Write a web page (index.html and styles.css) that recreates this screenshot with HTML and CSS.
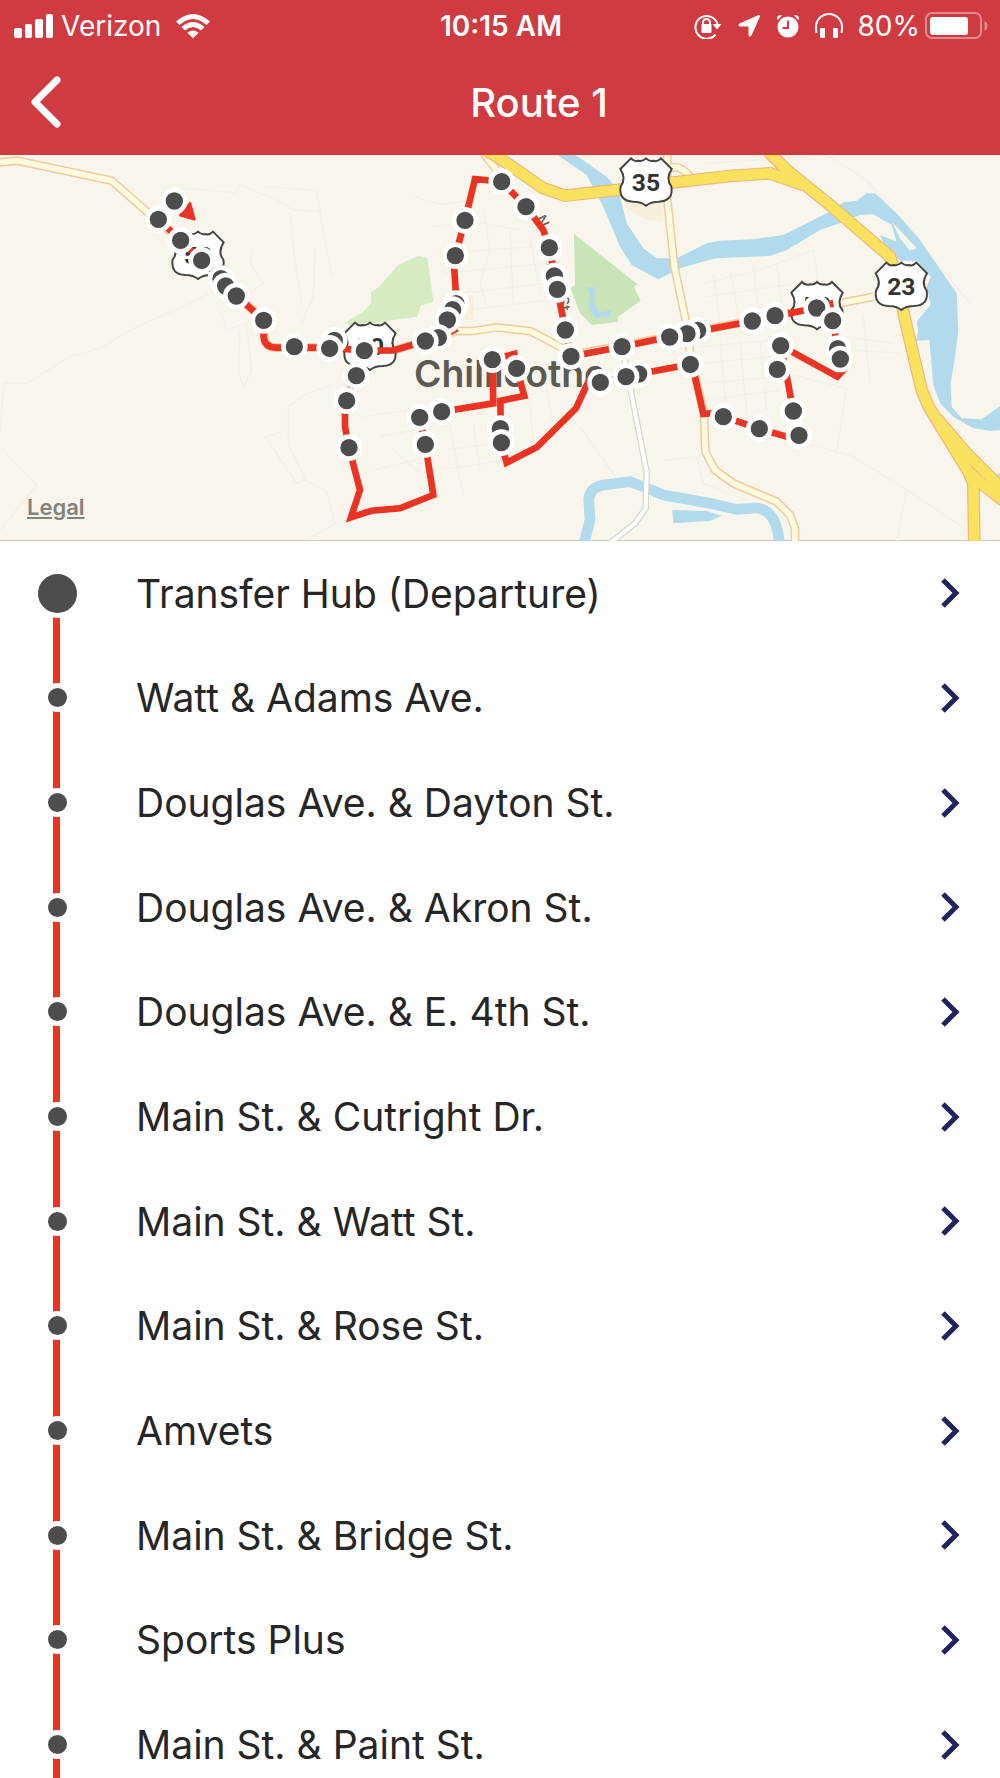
FILE: index.html
```html
<!DOCTYPE html>
<html lang="en">
<head>
    <meta charset="UTF-8">
    <meta name="viewport" content="width=device-width, initial-scale=1.0">
    <title>Route 1</title>
    <link rel="stylesheet" href="styles.css">
</head>
<body>
    <header class="header">
        <div class="status-bar">
            <div class="status-left">
                <svg class="signal" width="40" height="26" viewBox="0 0 40 26" aria-hidden="true">
                    <rect x="0" y="15" width="8" height="10" rx="2"/>
                    <rect x="11" y="11" width="7" height="14" rx="2"/>
                    <rect x="21" y="6" width="8" height="19" rx="2"/>
                    <rect x="32" y="1" width="7" height="24" rx="2"/>
                </svg>
                <span class="carrier">Verizon</span>
                <svg class="wifi" width="36" height="26" viewBox="0 0 36 26" aria-hidden="true">
                    <path d="M1 8.500Q18-6.500 35 8.500L31.500 12Q18 0 4.500 12Z"/>
                    <path d="M6.500 14Q18 4 29.500 14L26 17.500Q18 10.500 10 17.500Z"/>
                    <path d="M12.300 19.700Q18 15.300 23.700 19.700L18 25.300Z"/>
                </svg>
            </div>
            <span class="time">10:15 AM</span>
            <div class="status-right">
                <svg width="28" height="26" viewBox="0 0 28 26" aria-hidden="true">
                    <path class="line" d="M21.500 21.500A11.300 11.300 0 1 1 23.500 11"/>
                    <path d="M18.500 11H27.500L23 16.500Z"/>
                    <path class="line" d="M9 12V9.500a3.500 3.500 0 0 1 7 0V12"/>
                    <rect x="7.500" y="11" width="10" height="9" rx="1"/>
                </svg>
                <svg width="24" height="26" viewBox="0 0 24 26" aria-hidden="true">
                    <path d="M21.500 2Q23.500 1.500 23 3.500L14.500 22.500Q12.500 25 11.500 22V13.500H3Q0 12.500 2.500 10.500Z"/>
                </svg>
                <svg width="24" height="26" viewBox="0 0 24 26" aria-hidden="true">
                    <circle cx="12" cy="14" r="10.500"/>
                    <path d="M1 6.500Q.5 2 5 2L6 2.500L2 6.800ZM23 6.500Q23.500 2 19 2L18 2.500L22 6.800Z"/>
                    <path class="hand" d="M12 7.500V15H6.500"/>
                </svg>
                <svg width="28" height="26" viewBox="0 0 28 26" aria-hidden="true">
                    <path class="line" d="M1.500 20Q1 17 1 14A13 13 0 0 1 27 14Q27 17 26.500 20"/>
                    <path d="M5 16q0-1 1-1h4v9q0 1-1 1H6q-1 0-1-1ZM18 15h4q1 0 1 1v8q0 1-1 1h-3q-1 0-1-1Z"/>
                </svg>
                <span class="percent">80%</span>
                <svg class="battery" width="63" height="28" viewBox="0 0 63 28" aria-hidden="true">
                    <rect class="battery-case" x="1" y="1" width="55" height="25" rx="6"/>
                    <rect x="5" y="5" width="38" height="18" rx="3"/>
                    <path class="battery-tip" d="M59.500 9Q62.500 10.500 62.500 14T59.500 19Z"/>
                </svg>
            </div>
        </div>
        <div class="nav-bar">
            <button type="button" class="back" aria-label="Back">
                <svg width="32" height="52" viewBox="0 0 32 52" aria-hidden="true">
                    <path d="M27 4L5 26L27 48"/>
                </svg>
            </button>
            <h1>Route 1</h1>
        </div>
    </header>

    <div class="map">
        <svg class="map-canvas" viewBox="0 15 3000 1158" role="img" aria-label="Map of Route 1">
            <defs>
                <path id="shield" d="M-45 -70Q-34 -58 -22 -63Q-10 -60 0 -70Q10 -60 22 -63Q34 -58 45 -70L77 -38Q58 -8 76 14Q83 58 38 60Q14 60 0 72Q-14 60 -38 60Q-83 58 -76 14Q-58 -8 -77 -38Z"/>
            </defs>

            <!-- side streets -->
            <g class="street">
                <path d="M0 890L110 1005L0 1140M0 845L12 700H80L210 620L300 595L400 535L560 465L630 430"/>
                <path d="M560 115L705 128L720 105L830 150L880 180L960 185L995 380M800 110L950 122L965 210M870 190L885 330L905 470M905 520L940 440L945 300"/>
                <path d="M795 860L890 1000L915 990L865 880V770L920 730L1000 705M795 860L850 845M915 990L980 1025L1005 1120L930 1165"/>
                <path d="M760 290L750 340L790 400L720 450M660 480L680 540L740 520L755 660L730 715L715 660L720 540"/>
                <path d="M1240 140L1330 165L1400 150M1300 230L1420 215L1560 240M1310 310L1600 290M1330 370L1640 340M1450 180L1470 300L1440 400L1460 470M1530 240L1540 460M1590 260L1620 430M1380 430L1640 400M1400 480L1650 450"/>
                <path d="M1090 800L1230 780M1140 860L1240 840M1180 900L1260 970M1120 960L1250 930M1340 900L1480 880M1350 830L1390 1040M1420 820L1440 960M1590 760L1600 880M1640 720L1665 860M1320 960L1520 930M1740 830L1860 1000L1990 1040"/>
                <path d="M2110 400L2280 360L2440 300L2455 390M2120 440L2390 400M2140 370L2160 530M2190 360L2220 520M2260 350L2280 510M2330 340L2350 490M2100 590L2330 570M2110 640L2320 620M2110 700L2330 680M2120 750L2340 720M2160 570L2180 790M2220 570L2240 790M2280 570L2300 780"/>
                <path d="M2360 670L2540 715L2510 905M2420 880L2560 920L2720 1020L2690 1173M2720 1020L2900 1140M2540 560L2680 580M2560 600L2700 610M2590 500L2610 700M2120 40L2480 15L2600 90L2760 280L2910 460M1990 930L2090 920L2110 1000L2240 1050"/>
            </g>

            <!-- parks -->
            <path class="park-light" d="M1040 515L1090 485L1113 460V427L1135 412L1195 345L1255 318L1282 324L1300 455L1262 467L1252 500L1180 510L1050 530Z"/>
            <path class="park" d="M1722 252L1912 402L1902 412L1922 452L1852 502L1855 515L1775 525L1740 490L1712 415L1725 405Z"/>
            <path class="land" d="M1870 125L1990 110V215L1940 210L1880 175ZM1375 437H1420V510H1375Z"/>

            <!-- water -->
            <path class="water" d="M1757 412H1785L1782 460L1800 488L1835 480L1830 498L1785 503L1768 480L1770 432Z"/>
            <path class="water" d="M1665 10H1720L1820 80L1855 120L1880 220L1930 295L1970 325L2030 325L2120 280L2160 272L2260 268L2350 255L2480 190L2530 157L2570 152L2600 130H2625L2695 195L2760 270L2870 430L2875 545L2865 620L2852 700L2855 770L2885 805L2945 808L3000 768V840L2970 842L2920 835L2860 800L2820 760L2800 705L2788 570L2745 573L2755 545L2750 515L2770 490L2792 465L2780 410L2792 380L2750 332H2700L2660 300L2640 255L2690 275L2675 225L2620 193L2580 195L2520 220L2460 240L2360 300L2310 318L2145 325L2040 355L1975 388L1895 345L1860 290L1810 170L1760 75Z"/>
            <path class="island" d="M2676 215L2750 295L2730 302L2700 265Z"/>
            <path class="stream" d="M1752 1180L1770 1110L1766 1045Q1772 1012 1810 1005L1890 995L1935 1012L1990 1035L2130 1060L2210 1078L2270 1074Q2330 1080 2338 1180"/>
            <path class="water" d="M2017 1080L2120 1083L2165 1097L2130 1113L2020 1120ZM2970 980L3000 970V1000Z"/>

            <!-- roads, casing first and fill over it -->
            <g class="road-casing">
                <path d="M0 37L52 32L335 92L475 215L542 271L709 437L793 510V560Q795 593 830 593H990L1093 603L1180 601L1310 562L1370 543H1420L1490 532L1590 543L1680 590L1713 615L2008 560L2450 473L2620 440"/>
                <path d="M2002 0V150L2023 350L2055 500L2075 640L2112 790L2116 905L2145 960L2200 1000L2330 1055L2370 1095L2385 1135V1180"/>
                <path d="M2010 55Q2040 40 2080 90M1450 10L1490 60"/>
            </g>
            <g class="road">
                <path d="M0 37L52 32L335 92L475 215L542 271L709 437L793 510V560Q795 593 830 593H990L1093 603L1180 601L1310 562L1370 543H1420L1490 532L1590 543L1680 590L1713 615L2008 560L2450 473L2620 440"/>
                <path d="M2002 0V150L2023 350L2055 500L2075 640L2112 790L2116 905L2145 960L2200 1000L2330 1055L2370 1095L2385 1135V1180"/>
                <path d="M2010 55Q2040 40 2080 90M1450 10L1490 60"/>
            </g>
            <path class="lane-casing" d="M1868 600L1892 720L1940 965L1937 1075L1905 1120L1830 1180"/>
            <path class="lane" d="M1868 600L1892 720L1940 965L1937 1075L1905 1120L1830 1180"/>
            <path class="highway-casing" d="M1455 0L1500 25L1630 115L1695 137L1870 118L2015 98L2190 78L2310 70L2410 105M2305 5L2360 60L2410 100L2490 165L2670 320L2695 400L2713 500L2765 720L2785 768L2905 965L2920 1000L2923 1180M2810 805L2900 910L3010 1020M2905 965L2950 1005L3010 1052"/>
            <path class="highway" d="M1455 0L1500 25L1630 115L1695 137L1870 118L2015 98L2190 78L2310 70L2410 105M2305 5L2360 60L2410 100L2490 165L2670 320L2695 400L2713 500L2765 720L2785 768L2905 965L2920 1000L2923 1180M2810 805L2900 910L3010 1020M2905 965L2950 1005L3010 1052"/>

            <!-- labels -->
            <text class="city" x="1242" y="710">Chillicothe</text>
            <g class="street-name">
                <text transform="translate(1605 205) rotate(65)">N</text>
                <text transform="translate(1640 340) rotate(80)">B</text>
                <text transform="translate(1672 440) rotate(80)">St</text>
            </g>
            <g class="shield" transform="translate(1938 95)"><use href="#shield"/><text y="27">35</text></g>
            <g class="shield" transform="translate(2704 408)"><use href="#shield"/><text y="27">23</text></g>
            <g class="shield" transform="translate(2451 466)"><use href="#shield"/><text y="27">50</text></g>
            <g class="shield" transform="translate(1110 588)"><use href="#shield"/><text y="27">50</text></g>
            <g class="shield" transform="translate(594 315)"><use href="#shield"/><text y="27">50</text></g>

            <!-- bus route -->
            <path class="route" d="M523 153L475 208L542 271L605 330L709 437L791 510V560Q793 593 830 593H990L1093 602L1180 601L1276 573L1320 562L1362 540L1342 510L1358 478L1367 420L1363 360L1366 316L1395 211L1425 87L1505 95L1578 170L1630 240L1648 293L1672 418L1696 540L1713 619L1866 590L2008 560L2257 513L2450 473L2490 462L2498 513L2513 595L2535 655L2512 680L2342 587L2355 650L2380 783L2397 856L2360 860L2278 836L2170 800L2155 788L2110 792L2085 680L2071 643L1916 672L1801 697L1765 695L1728 775L1610 892L1520 938L1503 878L1501 752L1573 738L1550 655L1543 612L1477 629L1480 760L1325 785L1259 802L1276 883L1300 1035L1200 1075L1115 1082L1053 1102L1080 1020L1047 893L1035 830V752L1069 677L1093 602"/>
            <path class="arrow" d="M570 160L583 208L541 196Z"/>

            <g class="stop">
                <circle cx="523" cy="153" r="33"/>
                <circle cx="475" cy="208" r="33"/>
                <circle cx="542" cy="271" r="33"/>
                <circle cx="605" cy="331" r="33"/>
                <circle cx="663" cy="386" r="33"/>
                <circle cx="677" cy="408" r="33"/>
                <circle cx="709" cy="438" r="33"/>
                <circle cx="791" cy="511" r="33"/>
                <circle cx="883" cy="590" r="33"/>
                <circle cx="1003" cy="571" r="33"/>
                <circle cx="989" cy="595" r="33"/>
                <circle cx="1093" cy="602" r="33"/>
                <circle cx="1069" cy="677" r="33"/>
                <circle cx="1040" cy="752" r="33"/>
                <circle cx="1047" cy="893" r="33"/>
                <circle cx="1276" cy="883" r="33"/>
                <circle cx="1259" cy="802" r="33"/>
                <circle cx="1325" cy="785" r="33"/>
                <circle cx="1368" cy="461" r="33"/>
                <circle cx="1358" cy="479" r="33"/>
                <circle cx="1342" cy="510" r="33"/>
                <circle cx="1315" cy="563" r="33"/>
                <circle cx="1276" cy="573" r="33"/>
                <circle cx="1366" cy="317" r="33"/>
                <circle cx="1395" cy="211" r="33"/>
                <circle cx="1505" cy="95" r="33"/>
                <circle cx="1578" cy="170" r="33"/>
                <circle cx="1648" cy="293" r="33"/>
                <circle cx="1663" cy="378" r="33"/>
                <circle cx="1672" cy="418" r="33"/>
                <circle cx="1696" cy="540" r="33"/>
                <circle cx="1713" cy="619" r="33"/>
                <circle cx="1477" cy="629" r="33"/>
                <circle cx="1550" cy="655" r="33"/>
                <circle cx="1501" cy="836" r="33"/>
                <circle cx="1504" cy="878" r="33"/>
                <circle cx="1866" cy="590" r="33"/>
                <circle cx="1801" cy="697" r="33"/>
                <circle cx="1916" cy="672" r="33"/>
                <circle cx="1878" cy="680" r="33"/>
                <circle cx="2093" cy="541" r="33"/>
                <circle cx="2061" cy="551" r="33"/>
                <circle cx="2009" cy="561" r="33"/>
                <circle cx="2071" cy="643" r="33"/>
                <circle cx="2257" cy="513" r="33"/>
                <circle cx="2325" cy="497" r="33"/>
                <circle cx="2450" cy="474" r="33"/>
                <circle cx="2498" cy="512" r="33"/>
                <circle cx="2513" cy="596" r="33"/>
                <circle cx="2521" cy="627" r="33"/>
                <circle cx="2342" cy="587" r="33"/>
                <circle cx="2332" cy="658" r="33"/>
                <circle cx="2380" cy="783" r="33"/>
                <circle cx="2397" cy="856" r="33"/>
                <circle cx="2278" cy="836" r="33"/>
                <circle cx="2170" cy="800" r="33"/>
            </g>
        </svg>
        <a class="legal" href="#legal">Legal</a>
    </div>

    <ul class="stops">
        <li><a href="#stop-1"><span class="rail"></span><span class="name">Transfer Hub (Departure)</span><svg class="chevron" width="20" height="32" viewBox="0 0 20 32" aria-hidden="true"><path d="M3 3L16 16L3 29"/></svg></a></li>
        <li><a href="#stop-2"><span class="rail"></span><span class="name">Watt &amp; Adams Ave.</span><svg class="chevron" width="20" height="32" viewBox="0 0 20 32" aria-hidden="true"><path d="M3 3L16 16L3 29"/></svg></a></li>
        <li><a href="#stop-3"><span class="rail"></span><span class="name">Douglas Ave. &amp; Dayton St.</span><svg class="chevron" width="20" height="32" viewBox="0 0 20 32" aria-hidden="true"><path d="M3 3L16 16L3 29"/></svg></a></li>
        <li><a href="#stop-4"><span class="rail"></span><span class="name">Douglas Ave. &amp; Akron St.</span><svg class="chevron" width="20" height="32" viewBox="0 0 20 32" aria-hidden="true"><path d="M3 3L16 16L3 29"/></svg></a></li>
        <li><a href="#stop-5"><span class="rail"></span><span class="name">Douglas Ave. &amp; E. 4th St.</span><svg class="chevron" width="20" height="32" viewBox="0 0 20 32" aria-hidden="true"><path d="M3 3L16 16L3 29"/></svg></a></li>
        <li><a href="#stop-6"><span class="rail"></span><span class="name">Main St. &amp; Cutright Dr.</span><svg class="chevron" width="20" height="32" viewBox="0 0 20 32" aria-hidden="true"><path d="M3 3L16 16L3 29"/></svg></a></li>
        <li><a href="#stop-7"><span class="rail"></span><span class="name">Main St. &amp; Watt St.</span><svg class="chevron" width="20" height="32" viewBox="0 0 20 32" aria-hidden="true"><path d="M3 3L16 16L3 29"/></svg></a></li>
        <li><a href="#stop-8"><span class="rail"></span><span class="name">Main St. &amp; Rose St.</span><svg class="chevron" width="20" height="32" viewBox="0 0 20 32" aria-hidden="true"><path d="M3 3L16 16L3 29"/></svg></a></li>
        <li><a href="#stop-9"><span class="rail"></span><span class="name">Amvets</span><svg class="chevron" width="20" height="32" viewBox="0 0 20 32" aria-hidden="true"><path d="M3 3L16 16L3 29"/></svg></a></li>
        <li><a href="#stop-10"><span class="rail"></span><span class="name">Main St. &amp; Bridge St.</span><svg class="chevron" width="20" height="32" viewBox="0 0 20 32" aria-hidden="true"><path d="M3 3L16 16L3 29"/></svg></a></li>
        <li><a href="#stop-11"><span class="rail"></span><span class="name">Sports Plus</span><svg class="chevron" width="20" height="32" viewBox="0 0 20 32" aria-hidden="true"><path d="M3 3L16 16L3 29"/></svg></a></li>
        <li><a href="#stop-12"><span class="rail"></span><span class="name">Main St. &amp; Paint St.</span><svg class="chevron" width="20" height="32" viewBox="0 0 20 32" aria-hidden="true"><path d="M3 3L16 16L3 29"/></svg></a></li>
    </ul>
</body>
</html>
```
FILE: styles.css
```css
* {
    box-sizing: border-box;
}
body {
    margin: 0;
    height: 100vh;
    display: flex;
    flex-direction: column;
    overflow: hidden;
    background-color: #fff;
    color: #262626;
    font-family: Inter, "Liberation Sans", sans-serif;
}

/* header */
.header {
    flex: none;
    background-color: #cf3b41;
    color: #fff;
}
.status-bar {
    display: grid;
    grid-template-columns: 1fr auto 1fr;
    align-items: center;
    height: 51px;
    padding: 0 12px 0 14px;
    font-size: 28px;
}
.status-bar svg {
    fill: #fff;
}
.status-left,
.status-right {
    display: flex;
    align-items: center;
}
.status-left {
    gap: 7px;
}
.status-right {
    justify-content: flex-end;
    gap: 15px;
}
.wifi {
    margin-left: 7px;
}
.battery {
    margin-left: -10px;
}
.time {
    font-weight: 600;
}
.status-bar .line {
    fill: none;
    stroke: #fff;
    stroke-width: 2;
}
.status-bar .hand {
    fill: none;
    stroke: #cf3b41;
    stroke-width: 2;
}
.status-bar .battery-case {
    fill: none;
    stroke: #fff;
    stroke-width: 2;
    opacity: 0.4;
}
.status-bar .battery-tip {
    opacity: 0.4;
}
.nav-bar {
    display: flex;
    align-items: center;
    height: 104px;
    padding-bottom: 2px;
}
.back {
    display: flex;
    width: 78px;
    padding: 0 0 0 30px;
    border: none;
    background: none;
    cursor: pointer;
}
.back path {
    fill: none;
    stroke: #fff;
    stroke-width: 7;
    stroke-linecap: round;
    stroke-linejoin: round;
}
h1 {
    flex: 1;
    margin: 0;
    font-size: 40px;
    font-weight: 500;
    text-align: center;
}

/* map */
.map {
    position: relative;
    flex: none;
    border-bottom: 1px solid #cfc9c2;
    background-color: #f8f5ed;
}
.map-canvas {
    display: block;
    width: 100%;
    margin-bottom: -1px;
}
.map-canvas path {
    fill: none;
}
.street path {
    stroke: #f3efe6;
    stroke-width: 4;
}
.map-canvas .park-light {
    fill: #d6ebc1;
}
.map-canvas .park {
    fill: #c9e4b8;
}
.map-canvas .land {
    fill: #f6efd9;
}
.map-canvas .water {
    fill: #b2daed;
}
.map-canvas .island {
    fill: #f8f5ed;
}
.stream {
    stroke: #b2daed;
    stroke-width: 32;
}
.road-casing path {
    stroke: #efcb9d;
    stroke-width: 26;
}
.road path {
    stroke: #fdfbdf;
    stroke-width: 17;
}
.lane-casing {
    stroke: #d9d3cc;
    stroke-width: 19;
}
.lane {
    stroke: #fff;
    stroke-width: 12;
}
.highway-casing {
    stroke: #edb77b;
    stroke-width: 38;
}
.highway {
    stroke: #fae160;
    stroke-width: 31;
}
.city {
    fill: #5c5a54;
    stroke: #f8f5ed;
    stroke-width: 8;
    paint-order: stroke;
    font-size: 112px;
    font-weight: 600;
}
.street-name {
    fill: #6b6963;
    font-size: 46px;
    font-weight: 500;
}
.map-canvas #shield {
    fill: #fff;
    stroke: #444;
    stroke-width: 6;
}
.shield text {
    fill: #333;
    font-family: Roboto, "Liberation Sans", sans-serif;
    font-size: 74px;
    font-weight: 700;
    text-anchor: middle;
}
.route {
    stroke: #ea3323;
    stroke-width: 20;
}
.map-canvas .arrow {
    fill: #ea3323;
    stroke: #ea3323;
    stroke-width: 8;
    stroke-linejoin: round;
}
.stop circle {
    fill: #4d4d4d;
    stroke: #fff;
    stroke-width: 14;
}
.legal {
    position: absolute;
    left: 27px;
    bottom: 19px;
    color: #84827d;
    font-size: 22px;
    font-weight: 600;
    line-height: 28px;
}

/* stop list, the red line runs behind the dots */
.stops {
    flex: none;
    display: grid;
    grid-auto-rows: 1fr;
    min-height: 1256px;
    margin: 0;
    padding: 0;
    list-style: none;
    background: linear-gradient(#ea3323, #ea3323) 53px 60px / 7px 100% no-repeat;
}
.stops a {
    display: flex;
    align-items: center;
    height: 100%;
    padding-right: 40px;
    color: inherit;
    font-size: 39px;
    text-decoration: none;
}
.rail {
    display: flex;
    justify-content: center;
    width: 114px;
}
.rail::before {
    content: "";
    box-sizing: content-box;
    width: 19px;
    height: 19px;
    border: 5px solid #fff;
    border-radius: 50%;
    background-color: #4d4d4d;
}
.stops li:first-child .rail::before {
    width: 39px;
    height: 39px;
}
.name {
    flex: 1;
    padding-left: 22px;
}
.chevron {
    fill: none;
    stroke: #20235c;
    stroke-width: 5;
}
```
